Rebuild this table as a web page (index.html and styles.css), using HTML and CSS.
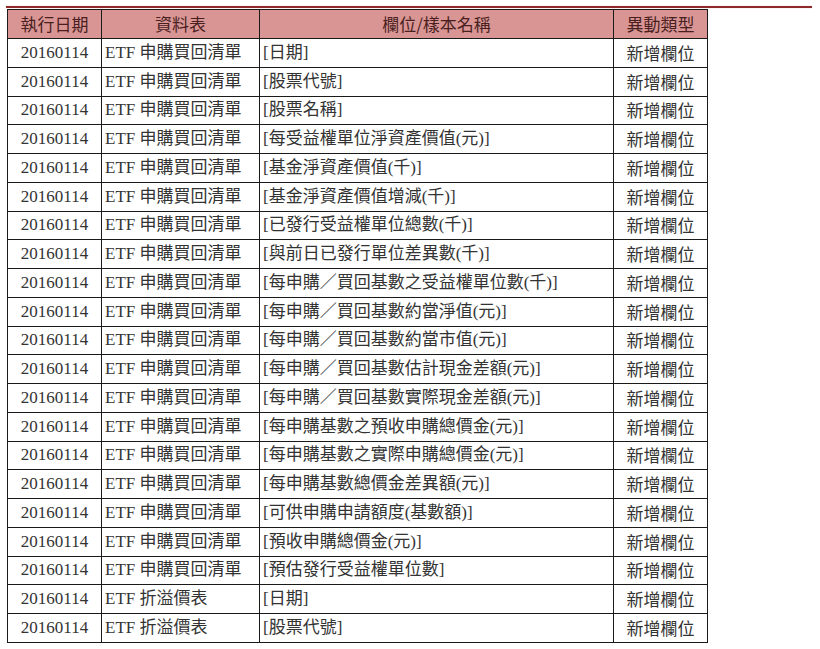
FILE: index.html
```html
<!DOCTYPE html>
<html lang="zh-Hant">
<head>
<meta charset="utf-8">
<title>ETF 異動</title>
<link rel="stylesheet" href="styles.css">
</head>
<body>
<div class="page">
  <div class="rule"></div>
  <table class="changes">
    <colgroup>
      <col class="c-date"><col class="c-table"><col class="c-field"><col class="c-type">
    </colgroup>
    <thead>
      <tr><th>執行日期</th><th>資料表</th><th>欄位/樣本名稱</th><th>異動類型</th></tr>
    </thead>
    <tbody>
      <tr><td class="date">20160114</td><td class="tbl">ETF 申購買回清單</td><td class="fld">[日期]</td><td class="type">新增欄位</td></tr>
      <tr><td class="date">20160114</td><td class="tbl">ETF 申購買回清單</td><td class="fld">[股票代號]</td><td class="type">新增欄位</td></tr>
      <tr><td class="date">20160114</td><td class="tbl">ETF 申購買回清單</td><td class="fld">[股票名稱]</td><td class="type">新增欄位</td></tr>
      <tr><td class="date">20160114</td><td class="tbl">ETF 申購買回清單</td><td class="fld">[每受益權單位淨資產價值(元)]</td><td class="type">新增欄位</td></tr>
      <tr><td class="date">20160114</td><td class="tbl">ETF 申購買回清單</td><td class="fld">[基金淨資產價值(千)]</td><td class="type">新增欄位</td></tr>
      <tr><td class="date">20160114</td><td class="tbl">ETF 申購買回清單</td><td class="fld">[基金淨資產價值增減(千)]</td><td class="type">新增欄位</td></tr>
      <tr><td class="date">20160114</td><td class="tbl">ETF 申購買回清單</td><td class="fld">[已發行受益權單位總數(千)]</td><td class="type">新增欄位</td></tr>
      <tr><td class="date">20160114</td><td class="tbl">ETF 申購買回清單</td><td class="fld">[與前日已發行單位差異數(千)]</td><td class="type">新增欄位</td></tr>
      <tr><td class="date">20160114</td><td class="tbl">ETF 申購買回清單</td><td class="fld">[每申購／買回基數之受益權單位數(千)]</td><td class="type">新增欄位</td></tr>
      <tr><td class="date">20160114</td><td class="tbl">ETF 申購買回清單</td><td class="fld">[每申購／買回基數約當淨值(元)]</td><td class="type">新增欄位</td></tr>
      <tr><td class="date">20160114</td><td class="tbl">ETF 申購買回清單</td><td class="fld">[每申購／買回基數約當市值(元)]</td><td class="type">新增欄位</td></tr>
      <tr><td class="date">20160114</td><td class="tbl">ETF 申購買回清單</td><td class="fld">[每申購／買回基數估計現金差額(元)]</td><td class="type">新增欄位</td></tr>
      <tr><td class="date">20160114</td><td class="tbl">ETF 申購買回清單</td><td class="fld">[每申購／買回基數實際現金差額(元)]</td><td class="type">新增欄位</td></tr>
      <tr><td class="date">20160114</td><td class="tbl">ETF 申購買回清單</td><td class="fld">[每申購基數之預收申購總價金(元)]</td><td class="type">新增欄位</td></tr>
      <tr><td class="date">20160114</td><td class="tbl">ETF 申購買回清單</td><td class="fld">[每申購基數之實際申購總價金(元)]</td><td class="type">新增欄位</td></tr>
      <tr><td class="date">20160114</td><td class="tbl">ETF 申購買回清單</td><td class="fld">[每申購基數總價金差異額(元)]</td><td class="type">新增欄位</td></tr>
      <tr><td class="date">20160114</td><td class="tbl">ETF 申購買回清單</td><td class="fld">[可供申購申請額度(基數額)]</td><td class="type">新增欄位</td></tr>
      <tr><td class="date">20160114</td><td class="tbl">ETF 申購買回清單</td><td class="fld">[預收申購總價金(元)]</td><td class="type">新增欄位</td></tr>
      <tr><td class="date">20160114</td><td class="tbl">ETF 申購買回清單</td><td class="fld">[預估發行受益權單位數]</td><td class="type">新增欄位</td></tr>
      <tr><td class="date">20160114</td><td class="tbl">ETF 折溢價表</td><td class="fld">[日期]</td><td class="type">新增欄位</td></tr>
      <tr><td class="date">20160114</td><td class="tbl">ETF 折溢價表</td><td class="fld">[股票代號]</td><td class="type">新增欄位</td></tr>
    </tbody>
  </table>
</div>
</body>
</html>
```
FILE: styles.css
```css
html, body {
  margin: 0;
  padding: 0;
  background: #ffffff;
}

.page {
  padding: 6px 0 0 6px;
  font-family: "Liberation Serif", "Noto Sans CJK TC", serif;
  color: #333333;
}

.rule {
  width: 806px;
  height: 2px;
  background: #8e2a2a;
  box-shadow: 0 0 1px #d99a9a;
}

.changes {
  margin: 1px 0 0 1px;
  border-collapse: collapse;
  table-layout: fixed;
  width: 700px;
  font-size: 17px;
}

.c-date { width: 94px; }
.c-table { width: 158px; }
.c-field { width: 354px; }
.c-type { width: 94px; }

.changes th,
.changes td {
  border: 1px solid #1a1a1a;
  padding: 0 3px;
  white-space: nowrap;
  overflow: hidden;
  line-height: 20px;
}

.changes th {
  height: 28px;
  background: #d99594;
  color: #4a1f1f;
  font-family: "Noto Sans CJK TC", sans-serif;
  font-weight: 400;
  text-align: center;
}

.changes td {
  height: 27.76px;
}

.changes td.date,
.changes td.type {
  text-align: center;
}

.changes td.type {
  font-family: "Noto Sans CJK TC", sans-serif;
}

.changes td.tbl,
.changes td.fld {
  text-align: left;
}
```
